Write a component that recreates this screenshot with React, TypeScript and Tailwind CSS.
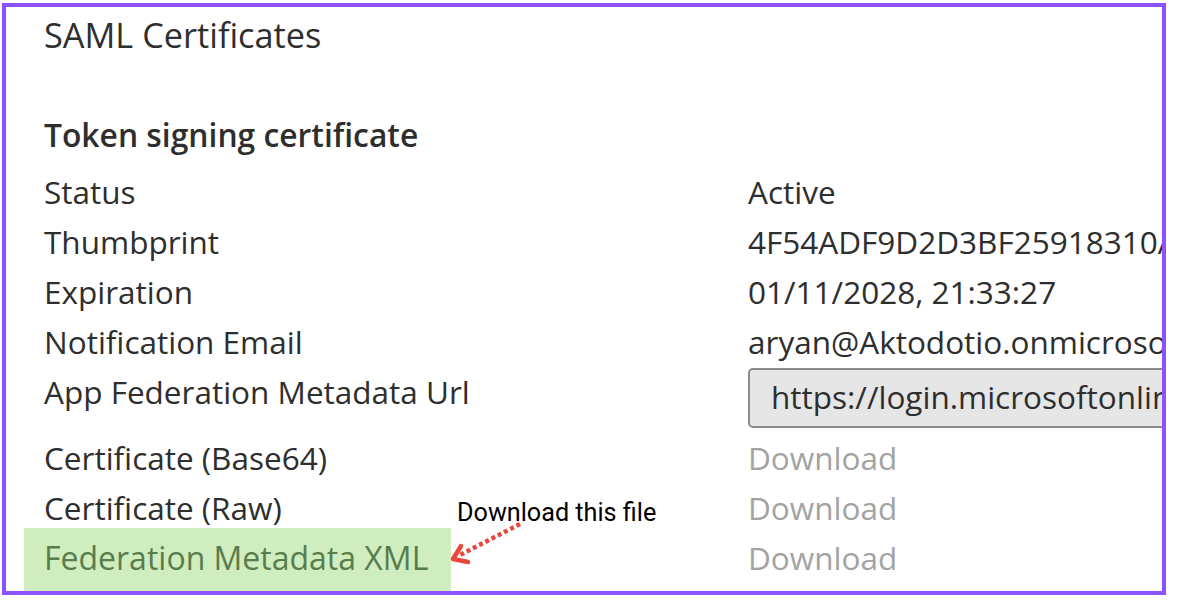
import React from "react";

const font = { fontFamily: '"Open Sans", "Noto Sans", sans-serif' };

function Row({ label, children, h = "h-[50px]" }: { label: React.ReactNode; children?: React.ReactNode; h?: string }) {
  return (
    <div className={`flex ${h} whitespace-nowrap`}>
      <div className="w-[704px] shrink-0 leading-[50px]">{label}</div>
      <div className="leading-[50px]">{children}</div>
    </div>
  );
}

export default function App() {
  return (
    <div className="w-[1186px] h-[602px] bg-white pt-[3px] pl-[2px]" style={font}>
      <div className="relative w-[1164px] h-[592px] border-4 border-[#8c52ff] overflow-hidden text-[#2e2e2e] text-[31.5px]">
        <div className="pl-[38px]">
          <div className="pt-[8px] leading-[40px] text-[34.3px]">SAML Certificates</div>
          <div className="mt-[55px] leading-[50px] font-semibold text-[31.8px]">Token signing certificate</div>
          <div className="mt-[7px]">
            <Row label="Status">Active</Row>
            <Row label="Thumbprint">4F54ADF9D2D3BF25918310A7C4E2</Row>
            <Row label="Expiration">01/11/2028, 21:33:27</Row>
            <Row label="Notification Email">aryan@Aktodotio.onmicrosoft.com</Row>
            <div className="flex h-[66px] whitespace-nowrap">
              <div className="w-[704px] shrink-0 leading-[50px]">App Federation Metadata Url</div>
              <div className="mt-[1px] h-[60px] w-[460px] rounded-[5px] border-2 border-[#8a8a8a] bg-[#e6e6e6] pl-[21px] leading-[54px]">
                https://login.microsoftonline.com/
              </div>
            </div>
            <Row label="Certificate (Base64)"><span className="text-[#a3a3a3]">Download</span></Row>
            <Row label="Certificate (Raw)"><span className="text-[#a3a3a3]">Download</span></Row>
            <div className="flex whitespace-nowrap">
              <div className="w-[704px] shrink-0">
                <div className="-ml-[20px] -mt-[5px] w-[427px] h-[70px] bg-[#d0edc0] pl-[20px] pt-[5px] leading-[50px] text-[#587d4c] text-[32px]">
                  Federation Metadata XML
                </div>
              </div>
              <div className="leading-[50px] text-[#a3a3a3]">Download</div>
            </div>
          </div>
        </div>

        <div className="absolute left-[451px] top-[490px] text-[25.2px] leading-[32px] text-black" style={{ fontFamily: 'Roboto, "Noto Sans", sans-serif' }}>
          Download this file
        </div>
        <svg className="absolute left-[440px] top-[507px]" width="90" height="60" viewBox="0 0 90 60">
          <line x1="74" y1="10" x2="14" y2="41" stroke="#e8473c" strokeWidth="4.5" strokeDasharray="4 3" />
          <path d="M15 32 L7 45 L22 48" fill="none" stroke="#e8473c" strokeWidth="4.5" strokeLinecap="round" strokeLinejoin="round" />
        </svg>
      </div>
    </div>
  );
}
